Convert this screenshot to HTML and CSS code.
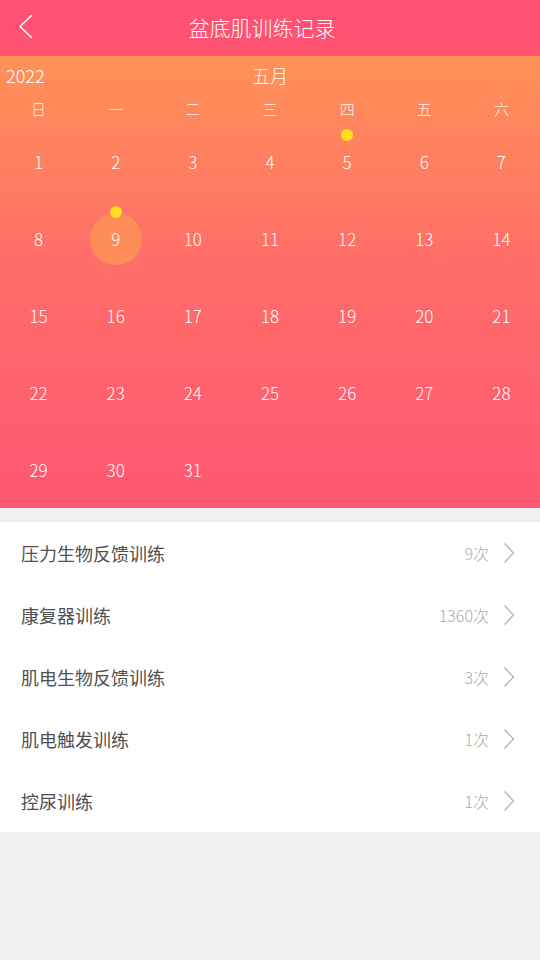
FILE: index.html
```html
<!DOCTYPE html>
<html lang="zh">
<head>
<meta charset="utf-8">
<link rel="stylesheet" href="styles.css">
</head>
<body>
<div class="topbar">
  <svg class="back" width="16" height="26" viewBox="0 0 16 26"><path d="M13.5 1.5 L2 12.5 L13.5 23.5" fill="none" stroke="#fff" stroke-width="1.5" stroke-linecap="round" stroke-linejoin="round"/></svg>
  <div class="title">盆底肌训练记录</div>
</div>
<div class="calendar">
  <div class="cal-head">
    <span class="year">2022</span>
    <span class="month">五月</span>
  </div>
  <div class="weekdays">
    <span>日</span><span>一</span><span>二</span><span>三</span><span>四</span><span>五</span><span>六</span>
  </div>
  <div class="days">
    <div class="day"><span class="num">1</span></div>
    <div class="day"><span class="num">2</span></div>
    <div class="day"><span class="num">3</span></div>
    <div class="day"><span class="num">4</span></div>
    <div class="day"><span class="dot"></span><span class="num">5</span></div>
    <div class="day"><span class="num">6</span></div>
    <div class="day"><span class="num">7</span></div>
    <div class="day"><span class="num">8</span></div>
    <div class="day sel"><span class="ring"></span><span class="dot"></span><span class="num">9</span></div>
    <div class="day"><span class="num">10</span></div>
    <div class="day"><span class="num">11</span></div>
    <div class="day"><span class="num">12</span></div>
    <div class="day"><span class="num">13</span></div>
    <div class="day"><span class="num">14</span></div>
    <div class="day"><span class="num">15</span></div>
    <div class="day"><span class="num">16</span></div>
    <div class="day"><span class="num">17</span></div>
    <div class="day"><span class="num">18</span></div>
    <div class="day"><span class="num">19</span></div>
    <div class="day"><span class="num">20</span></div>
    <div class="day"><span class="num">21</span></div>
    <div class="day"><span class="num">22</span></div>
    <div class="day"><span class="num">23</span></div>
    <div class="day"><span class="num">24</span></div>
    <div class="day"><span class="num">25</span></div>
    <div class="day"><span class="num">26</span></div>
    <div class="day"><span class="num">27</span></div>
    <div class="day"><span class="num">28</span></div>
    <div class="day"><span class="num">29</span></div>
    <div class="day"><span class="num">30</span></div>
    <div class="day"><span class="num">31</span></div>
  </div>
</div>
<div class="list">
  <div class="row"><span class="name">压力生物反馈训练</span><span class="count">9次</span><svg class="chev" width="12" height="22" viewBox="0 0 12 22"><path d="M1.5 1.5 L10.5 11 L1.5 20.5" fill="none" stroke="#b5b5b5" stroke-width="1.3"/></svg></div>
  <div class="row"><span class="name">康复器训练</span><span class="count">1360次</span><svg class="chev" width="12" height="22" viewBox="0 0 12 22"><path d="M1.5 1.5 L10.5 11 L1.5 20.5" fill="none" stroke="#b5b5b5" stroke-width="1.3"/></svg></div>
  <div class="row"><span class="name">肌电生物反馈训练</span><span class="count">3次</span><svg class="chev" width="12" height="22" viewBox="0 0 12 22"><path d="M1.5 1.5 L10.5 11 L1.5 20.5" fill="none" stroke="#b5b5b5" stroke-width="1.3"/></svg></div>
  <div class="row"><span class="name">肌电触发训练</span><span class="count">1次</span><svg class="chev" width="12" height="22" viewBox="0 0 12 22"><path d="M1.5 1.5 L10.5 11 L1.5 20.5" fill="none" stroke="#b5b5b5" stroke-width="1.3"/></svg></div>
  <div class="row"><span class="name">控尿训练</span><span class="count">1次</span><svg class="chev" width="12" height="22" viewBox="0 0 12 22"><path d="M1.5 1.5 L10.5 11 L1.5 20.5" fill="none" stroke="#b5b5b5" stroke-width="1.3"/></svg></div>
</div>
</body>
</html>
```
FILE: styles.css
```css
* { box-sizing: border-box; }
html, body { margin: 0; padding: 0; }
body {
  width: 540px;
  height: 960px;
  background: #f0f0f0;
  font-family: "Noto Sans CJK SC", "Noto Sans", sans-serif;
  font-weight: 300;
  overflow: hidden;
}
.topbar {
  position: relative;
  height: 56px;
  background: #ff5272;
  display: flex;
  align-items: center;
  justify-content: center;
}
.back {
  position: absolute;
  left: 18px;
  top: 14px;
}
.title {
  color: #fff;
  font-size: 21px;
  line-height: 1;
  margin-top: -2px;
  margin-right: 16px;
}
.calendar {
  height: 452px;
  background: linear-gradient(to bottom, #ff9257 0%, #ff6e68 45%, #ff5673 100%);
  color: #fff;
}
.cal-head {
  position: relative;
  height: 38px;
  display: flex;
  align-items: center;
  justify-content: center;
}
.year {
  position: absolute;
  left: 6px;
  top: 8px;
  font-size: 18px;
  line-height: 22px;
}
.month {
  font-size: 18px;
  line-height: 22px;
}
.weekdays {
  display: grid;
  grid-template-columns: repeat(7, 1fr);
  height: 29px;
  align-items: center;
  text-align: center;
  font-size: 15px;
  line-height: 18px;
  color: rgba(255,255,255,0.9);
}
.days {
  display: grid;
  grid-template-columns: repeat(7, 1fr);
  grid-auto-rows: 77px;
}
.day {
  position: relative;
  display: flex;
  align-items: center;
  justify-content: center;
}
.num {
  position: relative;
  font-size: 17px;
  line-height: 20px;
  color: #fff;
}
.dot {
  position: absolute;
  left: 50%;
  top: 6px;
  width: 12px;
  height: 12px;
  margin-left: -6px;
  border-radius: 50%;
  background: #ffe01f;
  z-index: 2;
}
.ring {
  position: absolute;
  left: 50%;
  top: 50%;
  width: 52px;
  height: 52px;
  margin-left: -26px;
  margin-top: -26px;
  border-radius: 50%;
  background: #ff9058;
  opacity: 0.9;
}
.list {
  margin-top: 14px;
  background: #fff;
}
.row {
  height: 62px;
  display: flex;
  align-items: center;
  padding: 0 25px 0 21px;
}
.name {
  flex: 1;
  font-size: 18px;
  font-weight: 400;
  color: #505050;
}
.count {
  font-size: 16px;
  color: #ababab;
  margin-right: 14px;
}
.chev { display: block; }
```
